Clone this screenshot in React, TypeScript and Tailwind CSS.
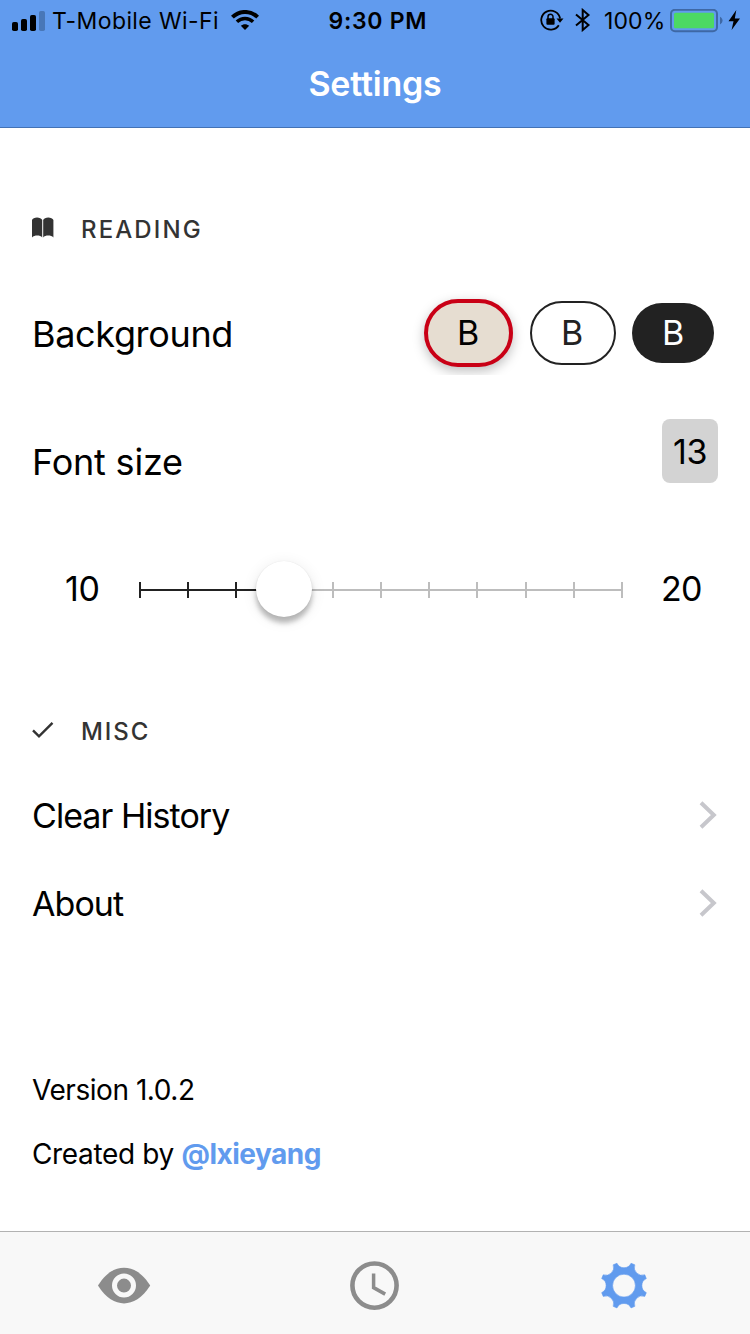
import React from "react";

const gearPath = (() => {
  const point = (deg: number, r: number) => {
    const a = ((deg - 90) * Math.PI) / 180;
    return `${(24 + r * Math.cos(a)).toFixed(2)} ${(24 + r * Math.sin(a)).toFixed(2)}`;
  };
  let d = `M${point(-17.5, 23.4)}`;
  for (let i = 0; i < 8; i++) {
    const c = i * 45;
    d += `A7.8 7.8 0 0 0 ${point(c + 17.5, 23.4)}L${point(c + 27.5, 23.4)}`;
  }
  return d + "ZM24 12.6a11.4 11.4 0 1 0 0 22.8a11.4 11.4 0 1 0 0-22.8Z";
})();

function StatusBar() {
  return (
    <div className="flex h-10 items-center pt-px text-[23px] leading-10 text-black">
      <div className="flex flex-1 items-center pl-3">
        <svg width="34" height="20" viewBox="0 0 34 20">
          <rect x="0" y="11" width="6" height="9" rx="1.8" />
          <rect x="9" y="8" width="6" height="12" rx="1.8" />
          <rect x="18" y="4" width="6" height="16" rx="1.8" />
          <rect x="27" y="0" width="6" height="20" rx="1.8" fill="#4877b8" />
        </svg>
        <span className="ml-[6px] w-[167px] whitespace-nowrap tracking-[0.4px]">T-Mobile Wi-Fi</span>
        <svg className="-mt-px ml-3" width="28" height="20" viewBox="0 0 28 20" fill="none" stroke="#000">
          <path d="M1.4 7.2C8.5.2 19.5.2 26.6 7.2" strokeWidth="4" />
          <path d="M5.9 11.8C10.5 7.4 17.5 7.4 22.1 11.8" strokeWidth="3.5" />
          <path d="M14 20L9.8 15.8C12.2 13.6 15.8 13.6 18.2 15.8Z" fill="#000" stroke="none" />
        </svg>
      </div>
      <span className="w-[96px] whitespace-nowrap font-semibold tracking-[0.7px]">9:30 PM</span>
      <div className="flex flex-1 items-center justify-end pr-[9px]">
        <svg className="-mt-px" width="24" height="22" viewBox="0 0 24 22">
          <path d="M18.8 16.2A9.5 9.5 0 1 1 20.1 9.5" fill="none" stroke="#000" strokeWidth="1.8" />
          <path d="M16.5 9.5h7l-3.5 4.2Z" />
          <rect x="6.4" y="9.3" width="8.2" height="6.5" rx="1" />
          <path d="M8 10V7.7a2.5 2.5 0 0 1 5 0V10" fill="none" stroke="#000" strokeWidth="1.5" />
        </svg>
        <svg className="-mt-px ml-[11px]" width="16" height="24" viewBox="0 0 16 24" fill="none" stroke="#000" strokeWidth="2">
          <path d="M1 6.5L13.5 17L7.7 22V2L13.5 7L1 17.5" />
        </svg>
        <span className="ml-[13px] w-[62px] whitespace-nowrap tracking-[0.1px]">100%</span>
        <svg className="ml-1" width="53" height="24" viewBox="0 0 53 24">
          <rect x="1" y="0.8" width="46" height="21.4" rx="4" fill="none" stroke="#3e68a5" strokeWidth="2" />
          <rect x="4" y="3.7" width="40" height="15.6" rx="1.5" fill="#4cd964" />
          <path d="M50 7.8c3.4 1.6 3.4 6 0 7.6Z" fill="#3e68a5" />
        </svg>
        <svg className="-mt-px ml-[5px]" width="13" height="20" viewBox="0 0 13 20">
          <path d="M8.3 0L.5 11.2H5.5L3.6 20L12 8.4H6.8Z" />
        </svg>
      </div>
    </div>
  );
}

function Chevron() {
  return (
    <svg width="20" height="30" viewBox="0 0 20 30" fill="none" stroke="#c7c7cc" strokeWidth="4">
      <path d="M3 2.8L15.8 15L3 27.2" />
    </svg>
  );
}

function Row({ label }: { label: string }) {
  return (
    <div className="flex h-[88px] items-center justify-between pr-8">
      <span className="text-[34px] tracking-[-0.95px]">{label}</span>
      <Chevron />
    </div>
  );
}

function Slider() {
  return (
    <div className="flex h-[60px] items-center">
      <span className="w-[107px] pb-[3px] pl-[33px] text-[34px] tracking-[-0.3px]">10</span>
      <div className="relative flex h-4 w-[484px] items-center justify-between">
        <div className="absolute left-0 h-0.5 w-36 bg-[#222]" />
        <div className="absolute left-36 h-0.5 w-[340px] bg-[#bdbdbd]" />
        {Array.from({ length: 11 }, (_, i) => (
          <div key={i} className={i < 3 ? "h-4 w-0.5 bg-[#222]" : "h-4 w-0.5 bg-[#bdbdbd]"} />
        ))}
        <div className="absolute left-[117px] top-[-21px] size-14 rounded-full bg-white shadow-[0_6px_5px_rgba(0,0,0,0.25),0_3px_16px_rgba(0,0,0,0.09),0_0_1px_rgba(0,0,0,0.12)]" />
      </div>
      <span className="ml-[38px] pb-[3px] text-[34px] tracking-[-0.7px]">20</span>
    </div>
  );
}

export default function App() {
  return (
    <div className="flex h-[1334px] w-[750px] flex-col overflow-hidden bg-white font-['Inter','Liberation_Sans',sans-serif] text-black">
      <header className="h-32 border-b border-[#4372b5] bg-[#619bee]">
        <StatusBar />
        <h1 className="flex h-[86px] items-center justify-center text-[34px] font-semibold tracking-[-0.2px] text-white">
          Settings
        </h1>
      </header>

      <main className="flex flex-1 flex-col pl-8">
        <div className="mt-[82px] flex h-10 items-center text-[#333]">
          <svg className="mb-[5px]" width="22" height="22" viewBox="0 0 22 22" fill="#333">
            <path d="M0 3C1 -.4 9 -.4 10.2 3V20.4C8.2 17.8 2.4 17.8 0 20.4Z" />
            <path d="M11.2 3C12.3 -.4 20.2 -.4 21.4 3V20.4C19.2 17.8 13.2 17.8 11.2 20.4Z" />
          </svg>
          <span className="ml-[27px] text-[24px] font-[450] tracking-[2.1px]">READING</span>
        </div>

        <div className="mt-[41px] flex h-[84px] items-center justify-between overflow-hidden pr-9">
          <span className="pt-px text-[36px] tracking-[-0.35px]">Background</span>
          <div className="flex items-center text-[34px] leading-none">
            <div className="flex h-[68px] w-[89px] items-center justify-center rounded-full border-4 border-[#c90016] bg-[#e6ddd1] pb-px pr-px shadow-[0_4px_12px_rgba(0,0,0,0.26)]">B</div>
            <div className="ml-[17px] flex h-16 w-[86px] items-center justify-center rounded-full border-2 border-[#222] pb-px pr-0.5 text-[#222]">B</div>
            <div className="ml-4 flex h-[60px] w-[82px] items-center justify-center rounded-full bg-[#222] pb-px text-white">B</div>
          </div>
        </div>

        <div className="mt-[44px] flex h-[84px] items-start justify-between pr-8">
          <span className="flex h-[86px] items-center text-[36px] tracking-[-0.2px]">Font size</span>
          <div className="flex h-16 w-14 items-center justify-center rounded-lg bg-[#d3d3d3] text-[34px] tracking-[-0.3px]">13</div>
        </div>

        <div className="mt-[57px]">
          <Slider />
        </div>

        <div className="mt-[92px] flex h-10 items-center text-[#333]">
          <svg className="mb-[5px]" width="22" height="20" viewBox="0 0 22 20" fill="none" stroke="#333" strokeWidth="2.4">
            <path d="M1 10.3L7 16.3L20.5 2.8" />
          </svg>
          <span className="ml-[27px] text-[24px] font-[450] tracking-[1.9px]">MISC</span>
        </div>

        <div className="mt-[19px]">
          <Row label="Clear History" />
          <Row label="About" />
        </div>

        <div className="mt-[111px] text-[28px] leading-[64px]">
          <p className="tracking-[-0.45px]">Version 1.0.2</p>
          <p className="tracking-[-0.35px]">
            Created by <span className="font-bold tracking-[-0.5px] text-[#619bee]">@lxieyang</span>
          </p>
        </div>
      </main>

      <nav className="grid h-[103px] grid-cols-3 items-center border-t border-[#b2b2b2] bg-[#f8f8f8] pt-[5px]">
        <div className="flex justify-center pr-0.5">
          <svg width="54" height="50" viewBox="0 0 54 50">
            <path d="M1 24.6C9 11.6 18 6.8 27 6.8S45 11.6 53.2 24.6C45 37.6 36 42.4 27 42.4S9 37.6 1 24.6Z" fill="#8c8c8c" />
            <circle cx="27" cy="24.6" r="9.5" fill="#8c8c8c" stroke="#f8f8f8" strokeWidth="5" />
          </svg>
        </div>
        <div className="flex justify-center">
          <svg width="50" height="50" viewBox="0 0 50 50" fill="none" stroke="#8c8c8c">
            <circle cx="24.5" cy="24.6" r="22.1" strokeWidth="4.6" />
            <path d="M23.6 12.4V26.6L35.2 33.1" strokeWidth="3.5" />
          </svg>
        </div>
        <div className="flex justify-center pr-0.5">
          <svg width="48" height="48" viewBox="0 0.4 48 48">
            <path d={gearPath} fill="#619bee" fillRule="evenodd" stroke="#619bee" strokeWidth="0.6" strokeLinejoin="round" />
          </svg>
        </div>
      </nav>
    </div>
  );
}
